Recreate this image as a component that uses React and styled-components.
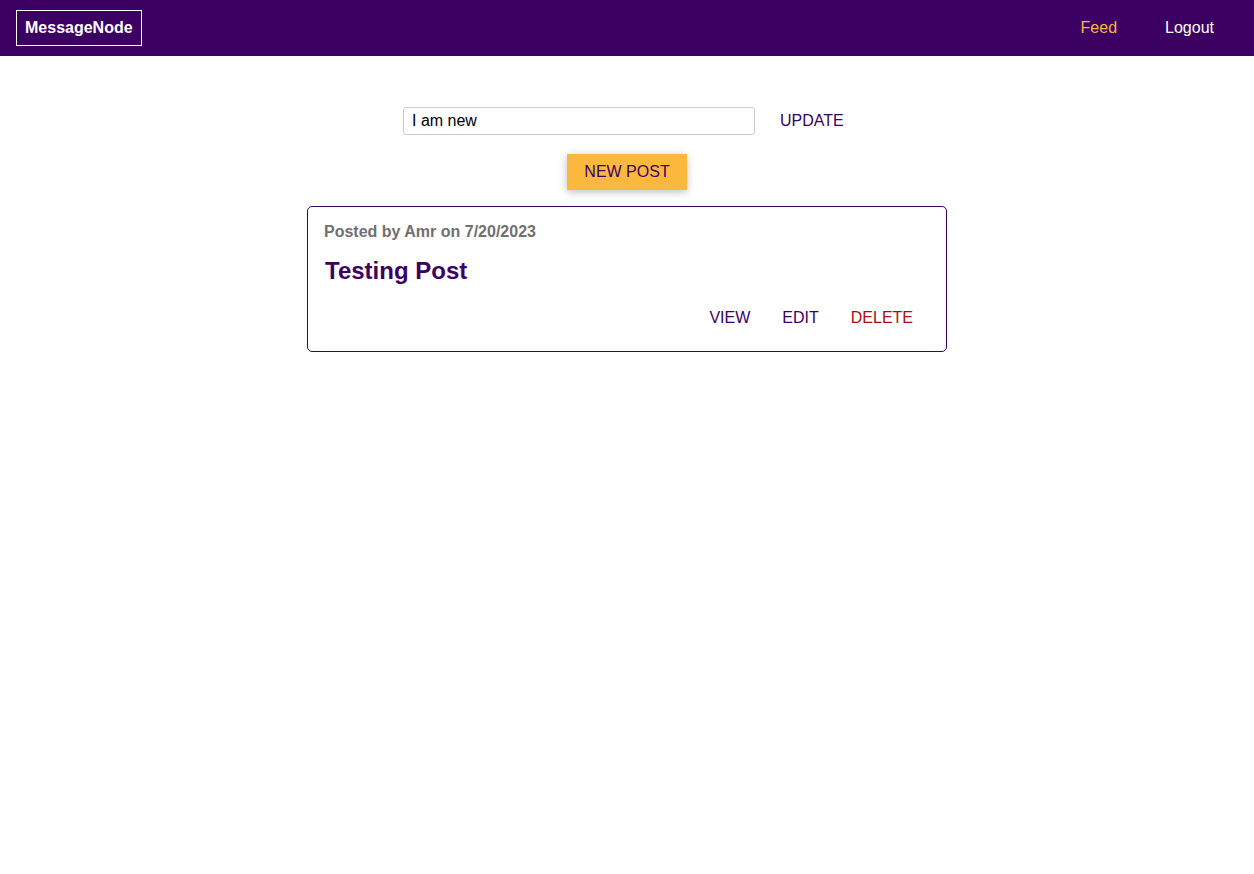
import React, { useState } from 'react';
import styled, { createGlobalStyle } from 'styled-components';

const GlobalStyle = createGlobalStyle`
  * {
    box-sizing: border-box;
  }

  html,
  body {
    margin: 0;
    padding: 0;
    background: #fff;
    font-family: 'Liberation Sans', Arial, sans-serif;
    font-size: 16px;
  }
`;

const Header = styled.header`
  height: 56px;
  background: #3b0062;
  display: flex;
  align-items: center;
  justify-content: space-between;
  padding: 0 40px 0 16px;
`;

const Logo = styled.a`
  display: block;
  border: 1px solid #fff;
  padding: 8px 8px;
  color: #fff;
  font-weight: bold;
  font-size: 16px;
  line-height: 18px;
  text-decoration: none;
`;

const NavList = styled.ul`
  list-style: none;
  margin: 0;
  padding: 0;
  display: flex;
  gap: 48px;
`;

const NavLink = styled.a`
  color: ${(p) => (p.active ? '#fab83f' : '#fff')};
  text-decoration: none;
  font-size: 16px;
`;

const Main = styled.main`
  padding-top: 47px;
`;

const StatusForm = styled.form`
  width: 480px;
  margin: 0 auto;
  padding-left: 16px;
  display: flex;
  align-items: center;
`;

const Input = styled.input`
  flex-shrink: 0;
  width: 352px;
  height: 28px;
  padding: 0 8px;
  border: 1px solid #ccc;
  border-radius: 3px;
  font: inherit;
  font-size: 16px;
  color: #000;
  outline: none;
`;

const Button = styled.button`
  flex-shrink: 0;
  font: inherit;
  font-size: 16px;
  line-height: 18px;
  cursor: pointer;
  padding: 8px ${(p) => (p.raised ? '16px' : '15px')};
  border-radius: 0;
  border: 1px solid ${(p) => (p.raised ? '#fab83f' : 'transparent')};
  background: ${(p) => (p.raised ? '#fab83f' : 'transparent')};
  color: ${(p) => (p.danger ? '#a80d0d' : '#3b0062')};
  box-shadow: ${(p) => (p.raised ? '0 2px 8px rgba(0, 0, 0, 0.26)' : 'none')};
`;

const SubmitButton = styled(Button)`
  margin-left: 7px;
  padding: 8px 17px;
`;

const ControlRow = styled.div`
  display: flex;
  justify-content: center;
  margin-top: 15px;
`;

const Feed = styled.section`
  width: 640px;
  margin: 16px auto 0;
`;

const Post = styled.article`
  border: 1px solid #3b0062;
  border-radius: 5px;
  padding: 16px 16px 15px;
`;

const Meta = styled.h3`
  margin: 0;
  font-size: 16px;
  line-height: 18px;
  color: #707070;
`;

const Title = styled.h1`
  margin: 16px 0 15px;
  font-size: 24px;
  line-height: 28px;
  color: #3b0062;
  padding-left: 1px;
`;

const Actions = styled.div`
  display: flex;
  justify-content: flex-end;
  padding-right: 1px;
`;

export default function App() {
  const [status, setStatus] = useState('I am new');

  return (
    <>
      <GlobalStyle />
      <Header>
        <Logo href="#">MessageNode</Logo>
        <nav>
          <NavList>
            <li>
              <NavLink href="#" active>
                Feed
              </NavLink>
            </li>
            <li>
              <NavLink href="#">Logout</NavLink>
            </li>
          </NavList>
        </nav>
      </Header>
      <Main>
        <StatusForm onSubmit={(e) => e.preventDefault()}>
          <Input value={status} onChange={(e) => setStatus(e.target.value)} />
          <SubmitButton type="submit">UPDATE</SubmitButton>
        </StatusForm>
        <ControlRow>
          <Button raised>NEW POST</Button>
        </ControlRow>
        <Feed>
          <Post>
            <Meta>Posted by Amr on 7/20/2023</Meta>
            <Title>Testing Post</Title>
            <Actions>
              <Button>VIEW</Button>
              <Button>EDIT</Button>
              <Button danger>DELETE</Button>
            </Actions>
          </Post>
        </Feed>
      </Main>
    </>
  );
}
